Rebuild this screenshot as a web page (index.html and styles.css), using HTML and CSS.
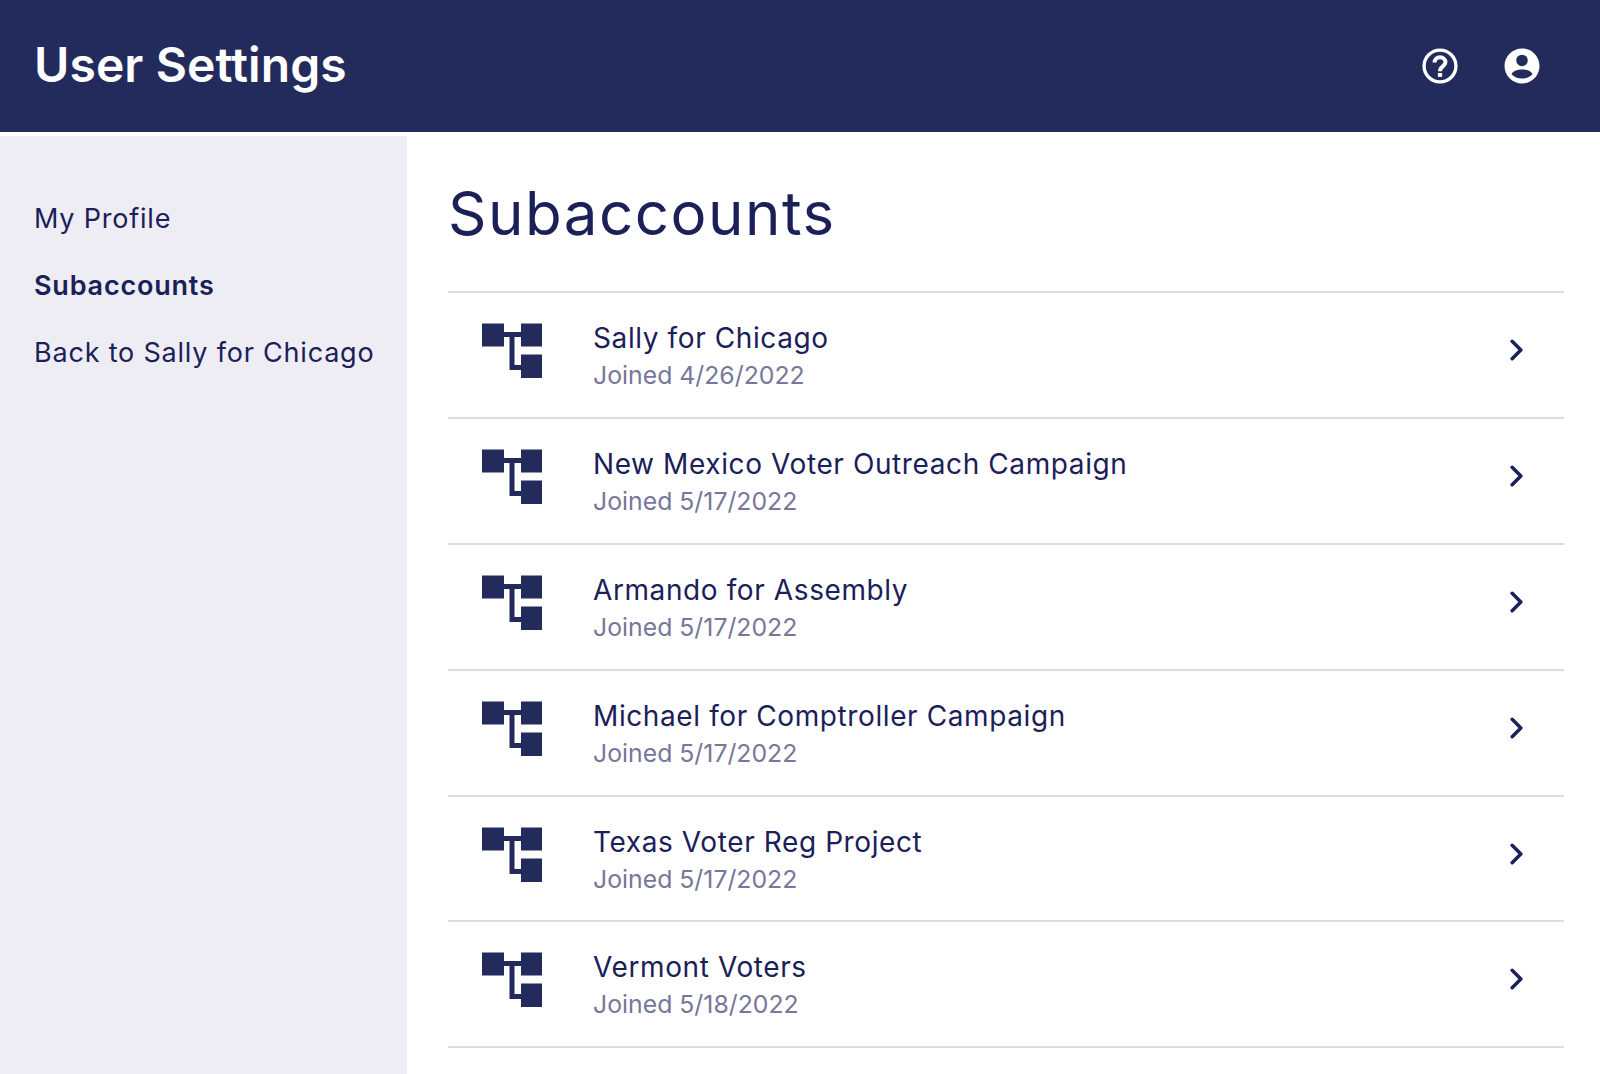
FILE: index.html
```html
<!DOCTYPE html>
<html lang="en">
<head>
    <meta charset="UTF-8">
    <title>User Settings</title>
    <link rel="stylesheet" href="styles.css">
</head>
<body>
    <svg class="defs" width="0" height="0">
        <symbol id="org" viewBox="0 0 60 54">
            <rect x="0" y="0" width="22" height="23"/>
            <rect x="39" y="0" width="21" height="23"/>
            <rect x="39" y="31" width="21" height="24"/>
            <path d="M20 11h20M30 11v33h10" fill="none" stroke="#232b5d" stroke-width="5"/>
        </symbol>
    </svg>

    <header class="topbar">
        <h1>User Settings</h1>
        <div class="topbar-icons">
            <svg class="top-icon" viewBox="0 0 24 24"><circle cx="12" cy="12" r="9.100" fill="none" stroke="#fff" stroke-width="1.900"/><path fill="none" stroke="#fff" stroke-width="2.300" d="M8.900 10c0-1.800 1.400-3 3.100-3s3.100 1.200 3.100 2.900c0 2.300-3.100 2.300-3.100 5.100"/><rect x="10.800" y="16" width="2.400" height="2.200" fill="#fff"/></svg>
            <svg class="top-icon" viewBox="0 0 24 24"><path fill="#fff" fill-rule="evenodd" d="M12 2C6.480 2 2 6.480 2 12s4.480 10 10 10 10-4.480 10-10S17.520 2 12 2zm0 3.500a3.300 3.300 0 1 1 0 6.600 3.300 3.300 0 0 1 0-6.600zM12 14c2.900 0 5.400 1 6 2.700-1.400 1.500-3.600 2.500-6 2.500s-4.600-1-6-2.500C6.600 15 9.100 14 12 14z"/></svg>
        </div>
    </header>

    <div class="layout">
        <nav class="sidebar">
            <a href="#">My Profile</a>
            <a href="#" class="active">Subaccounts</a>
            <a href="#">Back to Sally for Chicago</a>
        </nav>

        <main class="content">
            <h2>Subaccounts</h2>
            <ul class="accounts">
                <li>
                    <svg class="org-icon"><use href="#org"/></svg>
                    <div class="account-text">
                        <div class="account-name">Sally for Chicago</div>
                        <div class="account-date">Joined 4/26/2022</div>
                    </div>
                    <svg class="chevron" viewBox="0 0 12 20"><path d="M2 2l8 8-8 8"/></svg>
                </li>
                <li>
                    <svg class="org-icon"><use href="#org"/></svg>
                    <div class="account-text">
                        <div class="account-name">New Mexico Voter Outreach Campaign</div>
                        <div class="account-date">Joined 5/17/2022</div>
                    </div>
                    <svg class="chevron" viewBox="0 0 12 20"><path d="M2 2l8 8-8 8"/></svg>
                </li>
                <li>
                    <svg class="org-icon"><use href="#org"/></svg>
                    <div class="account-text">
                        <div class="account-name">Armando for Assembly</div>
                        <div class="account-date">Joined 5/17/2022</div>
                    </div>
                    <svg class="chevron" viewBox="0 0 12 20"><path d="M2 2l8 8-8 8"/></svg>
                </li>
                <li>
                    <svg class="org-icon"><use href="#org"/></svg>
                    <div class="account-text">
                        <div class="account-name">Michael for Comptroller Campaign</div>
                        <div class="account-date">Joined 5/17/2022</div>
                    </div>
                    <svg class="chevron" viewBox="0 0 12 20"><path d="M2 2l8 8-8 8"/></svg>
                </li>
                <li>
                    <svg class="org-icon"><use href="#org"/></svg>
                    <div class="account-text">
                        <div class="account-name">Texas Voter Reg Project</div>
                        <div class="account-date">Joined 5/17/2022</div>
                    </div>
                    <svg class="chevron" viewBox="0 0 12 20"><path d="M2 2l8 8-8 8"/></svg>
                </li>
                <li>
                    <svg class="org-icon"><use href="#org"/></svg>
                    <div class="account-text">
                        <div class="account-name">Vermont Voters</div>
                        <div class="account-date">Joined 5/18/2022</div>
                    </div>
                    <svg class="chevron" viewBox="0 0 12 20"><path d="M2 2l8 8-8 8"/></svg>
                </li>
            </ul>
        </main>
    </div>
</body>
</html>
```

FILE: styles.css
```css
* {
    box-sizing: border-box;
}

html, body {
    height: 100%;
}

body {
    margin: 0;
    font-family: Inter, "Noto Sans", sans-serif;
    color: #1b2059;
    background-color: white;
    overflow: hidden;
}

.defs {
    display: block;
    height: 0;
}

.topbar {
    height: 132px;
    background-color: #232b5d;
    display: flex;
    align-items: center;
    justify-content: space-between;
    padding: 0 57px 0 34px;
}

.topbar h1 {
    margin: 0 0 4px;
    color: white;
    font-size: 48px;
    font-weight: 600;
    letter-spacing: 0.1px;
}

.topbar-icons {
    display: flex;
    gap: 40px;
}

.top-icon {
    width: 42px;
    height: 42px;
    display: block;
}

.layout {
    display: flex;
    height: 942px;
}

.sidebar {
    width: 407px;
    margin-top: 4px;
    background-color: #eeedf3;
    padding: 68px 0 0 34px;
    display: flex;
    flex-direction: column;
    gap: 37px;
}

.sidebar a {
    color: #1b2059;
    text-decoration: none;
    font-size: 27px;
    line-height: 30px;
    letter-spacing: 0.8px;
}

.sidebar a.active {
    font-weight: 600;
}

.content {
    width: 1116px;
    margin-left: 41px;
}

.content h2 {
    margin: 0;
    padding-top: 45px;
    height: 159px;
    font-size: 60px;
    line-height: 72px;
    font-weight: 400;
    letter-spacing: 1.5px;
}

.accounts {
    list-style: none;
    margin: 0;
    padding: 0;
    border-top: 2px solid #dcdce0;
}

.accounts li {
    height: 125.9px;
    border-bottom: 2px solid #dcdce0;
    display: flex;
    align-items: flex-start;
    padding-left: 34px;
}

.org-icon {
    width: 60px;
    height: 55px;
    margin-top: 30px;
    fill: #232b5d;
    flex-shrink: 0;
}

.account-text {
    margin-left: 51px;
    margin-top: 27px;
    flex: 1;
}

.account-name {
    font-size: 28px;
    line-height: 36px;
    letter-spacing: 0.6px;
}

.account-date {
    margin-top: 1px;
    font-size: 24.8px;
    line-height: 36px;
    color: #77779a;
}

.chevron {
    width: 13px;
    height: 22px;
    margin: 46px 41px 0 0;
    fill: none;
    stroke: #1b2059;
    stroke-width: 3.2;
    stroke-linecap: round;
    stroke-linejoin: round;
}
```
